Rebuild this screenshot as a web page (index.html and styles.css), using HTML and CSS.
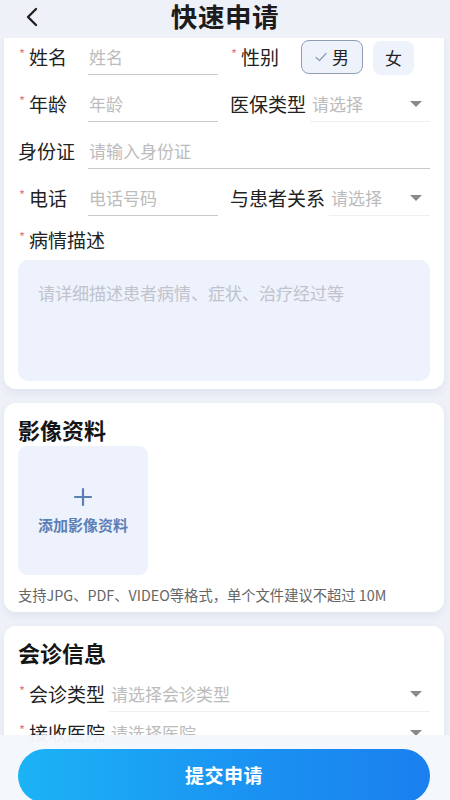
FILE: index.html
```html
<!DOCTYPE html>
<html lang="zh-CN">
<head>
<meta charset="utf-8">
<title>快速申请</title>
<link rel="stylesheet" href="styles.css">
</head>
<body>
<div class="page">
  <header class="topbar">
    <span class="back">
      <svg width="14" height="20" viewBox="0 0 14 20"><path d="M11 2 L3 10 L11 18" fill="none" stroke="#222" stroke-width="2.4" stroke-linecap="round" stroke-linejoin="round"/></svg>
    </span>
    <h1 class="title">快速申请</h1>
  </header>

  <section class="card card-first">
    <div class="row">
      <div class="field half">
        <span class="lbl fixed req">姓名</span>
        <span class="input">姓名</span>
      </div>
      <div class="field half">
        <span class="lbl req">性别</span>
        <div class="gender">
          <span class="opt on"><svg width="12" height="10" viewBox="0 0 12 10"><path d="M1 5.5 L4.5 8.5 L11 1.5" fill="none" stroke="#8d9bb3" stroke-width="1.2" stroke-linecap="round" stroke-linejoin="round"/></svg>男</span>
          <span class="opt">女</span>
        </div>
      </div>
    </div>
    <div class="row">
      <div class="field half">
        <span class="lbl fixed req">年龄</span>
        <span class="input">年龄</span>
      </div>
      <div class="field half">
        <span class="lbl">医保类型</span>
        <span class="select">请选择<i class="caret"></i></span>
      </div>
    </div>
    <div class="row">
      <div class="field full">
        <span class="lbl fixed">身份证</span>
        <span class="input">请输入身份证</span>
      </div>
    </div>
    <div class="row">
      <div class="field half">
        <span class="lbl fixed req">电话</span>
        <span class="input">电话号码</span>
      </div>
      <div class="field half">
        <span class="lbl">与患者关系</span>
        <span class="select">请选择<i class="caret"></i></span>
      </div>
    </div>
    <div class="desc-label lbl req">病情描述</div>
    <div class="textarea">请详细描述患者病情、症状、治疗经过等</div>
  </section>

  <section class="card">
    <h2 class="sec-title">影像资料</h2>
    <div class="upload">
      <svg class="plus" width="20" height="20" viewBox="0 0 20 20"><path d="M10 2 V18 M2 10 H18" stroke="#5b7fb5" stroke-width="2.2" stroke-linecap="round"/></svg>
      <span class="upload-text">添加影像资料</span>
    </div>
    <p class="hint">支持JPG、PDF、VIDEO等格式，单个文件建议不超过 10M</p>
  </section>

  <section class="card">
    <h2 class="sec-title">会诊信息</h2>
    <div class="row">
      <div class="field full">
        <span class="lbl req">会诊类型</span>
        <span class="select">请选择会诊类型<i class="caret"></i></span>
      </div>
    </div>
    <div class="row">
      <div class="field full">
        <span class="lbl req">接收医院</span>
        <span class="select">请选择医院<i class="caret"></i></span>
      </div>
    </div>
  </section>

  <footer class="bottombar">
    <button class="submit">提交申请</button>
  </footer>
</div>
</body>
</html>
```

FILE: styles.css
```css
* { box-sizing: border-box; }
html, body {
  margin: 0;
  padding: 0;
  height: 100%;
  overflow: hidden;
}
body {
  background: #eef1f8;
  font-family: "Noto Sans CJK SC", "Noto Sans", sans-serif;
  color: #222;
}
.page {
  width: 450px;
  height: 800px;
  overflow: hidden;
}
.topbar {
  height: 38px;
  display: flex;
  align-items: flex-start;
  justify-content: center;
  background: #eef1f8;
  position: relative;
  padding-top: 1px;
}
.back {
  position: absolute;
  left: 25px;
  top: 7px;
  display: flex;
}
.title {
  margin: 0;
  font-size: 26.5px;
  font-weight: 700;
  line-height: 30px;
  letter-spacing: 0.6px;
  color: #1c1c1c;
}
.card {
  margin: 0 6px 14px 4px;
  background: #fff;
  border-radius: 12px;
  padding: 12px 14px 8px 14px;
  box-shadow: 0 4px 8px rgba(40, 60, 100, 0.07);
}
.card-first {
  border-radius: 0 0 12px 12px;
  padding-top: 1px;
}
.row {
  display: flex;
  gap: 12px;
  height: 36px;
  margin-bottom: 11px;
}
.field {
  display: flex;
  align-items: center;
  height: 36px;
}
.half { width: 200px; }
.full { flex: 1; }
.lbl {
  display: flex;
  align-items: center;
  font-size: 19px;
  line-height: 26px;
  color: #222;
  white-space: nowrap;
}
.lbl.fixed { width: 70px; flex: none; }
.req::before {
  content: "*";
  color: #e07b7b;
  font-size: 13px;
  width: 10px;
  margin-top: -6px;
  padding-left: 1px;
}
.input {
  flex: 1;
  height: 36px;
  display: flex;
  align-items: center;
  padding-left: 1px;
  font-size: 17px;
  color: #bcbcbc;
  border-bottom: 1px solid #c9c9c9;
}
.select {
  flex: 1;
  height: 36px;
  margin-left: 4px;
  display: flex;
  align-items: center;
  padding-left: 2px;
  font-size: 17px;
  color: #bcbcbc;
  border-bottom: 1px solid #f0f0f0;
  position: relative;
}
.caret {
  position: absolute;
  right: 8px;
  top: 15px;
  width: 0;
  height: 0;
  border-left: 6px solid transparent;
  border-right: 6px solid transparent;
  border-top: 6px solid #8a8a8a;
}
.gender {
  display: flex;
  gap: 10px;
  margin-left: 22px;
}
.opt {
  height: 34px;
  display: flex;
  align-items: center;
  justify-content: center;
  gap: 5px;
  background: #eef2fb;
  border-radius: 8px;
  font-size: 17px;
  color: #222;
  padding: 0 12px;
  margin-top: 1px;
}
.opt.on {
  width: 62px;
  border: 1px solid #8e9cb6;
  margin-top: 0;
}
.desc-label {
  height: 26px;
  margin-top: 0;
}
.textarea {
  margin-top: 7px;
  height: 121px;
  background: #eef2fc;
  border-radius: 10px;
  padding: 20px 20px;
  font-size: 17px;
  color: #c0c3cb;
  line-height: 26px;
}
.sec-title {
  margin: 0;
  font-size: 22px;
  font-weight: 700;
  line-height: 28px;
  color: #151515;
}
.upload {
  margin-top: 3px;
  width: 130px;
  height: 129px;
  background: #eef2fc;
  border-radius: 9px;
  display: flex;
  flex-direction: column;
  align-items: center;
  padding-top: 41px;
}
.upload-text {
  margin-top: 8px;
  font-size: 15px;
  font-weight: 700;
  color: #5b80b8;
  line-height: 20px;
}
.hint {
  margin: 11px 0 0 0;
  font-size: 14.3px;
  line-height: 18px;
  color: #666;
  white-space: nowrap;
}
.card .sec-title + .row { margin-top: 10px; }
.card:last-of-type .row { margin-bottom: 3px; }
.bottombar {
  position: fixed;
  left: 0;
  right: 0;
  bottom: 0;
  height: 65px;
  background: rgba(244, 247, 251, 0.97);
  padding: 14px 20px 0 18px;
}
.submit {
  width: 412px;
  height: 54px;
  border: none;
  border-radius: 27px;
  background: linear-gradient(90deg, #1cb3f6 0%, #1a93f2 55%, #1a80ef 100%);
  color: #fff;
  font-family: "Noto Sans CJK SC", sans-serif;
  font-size: 19px;
  font-weight: 700;
  letter-spacing: 0.5px;
  padding: 0 0 4px 0;
}
```
